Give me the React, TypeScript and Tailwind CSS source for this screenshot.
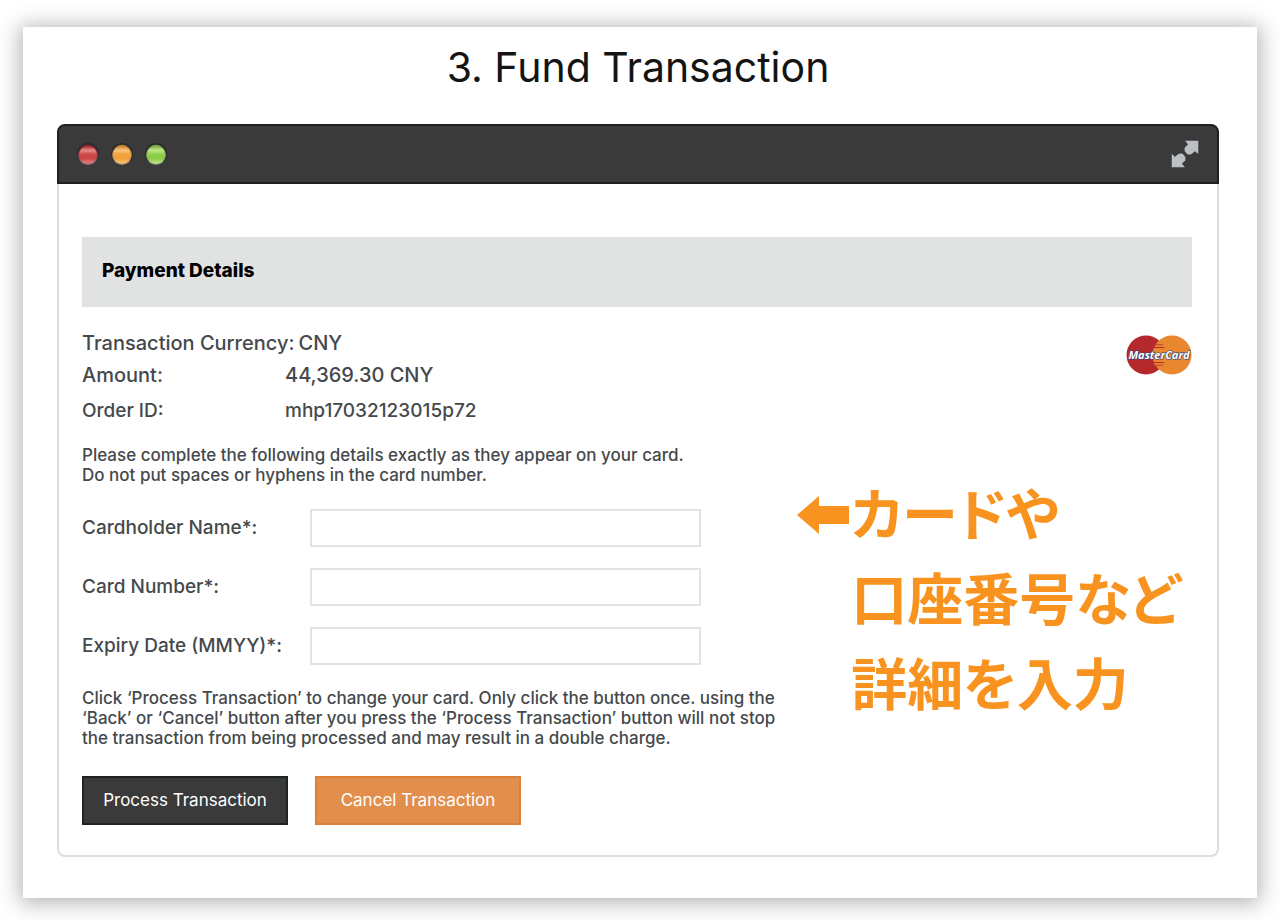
import { useState } from "react";

const FIELDS = [
  { id: "cardholder", label: "Cardholder Name*:" },
  { id: "cardnumber", label: "Card Number*:" },
  { id: "expiry", label: "Expiry Date (MMYY)*:" },
];

function WindowLight({ id, light, mid, dark }: { id: string; light: string; mid: string; dark: string }) {
  return (
    <svg viewBox="0 0 22 22" className="w-[22px] h-[22px]" aria-hidden="true">
      <defs>
        <linearGradient id={id} x1="0" y1="0" x2="0" y2="1">
          <stop offset="0" stopColor={dark} />
          <stop offset="0.25" stopColor={light} />
          <stop offset="0.5" stopColor={mid} />
          <stop offset="0.7" stopColor={mid} />
          <stop offset="1" stopColor={light} />
        </linearGradient>
      </defs>
      <circle cx="11" cy="11" r="11" fill="#2b2b30" />
      <circle cx="11" cy="12.3" r="9.7" fill="#8d8f8c" />
      <circle cx="11" cy="11.5" r="9.7" fill={dark} />
      <circle cx="11" cy="11.8" r="9" fill={`url(#${id})`} />
    </svg>
  );
}

function ExpandIcon() {
  return (
    <svg viewBox="0 0 28 28" className="w-7 h-7" fill="#bcc0c5" stroke="#2a2b2d" strokeWidth="0.4" aria-hidden="true">
      <path d="M13.8 0.5H27.5V14.5L24 11.5L20.5 14.3Q18.5 15.3 16.5 14.5L14 12Q12.8 10 13.5 7.5L16.8 4.5Z" />
      <path d="M14.2 27.5H0.5V13.5L4 16.5L7.5 13.7Q9.5 12.7 11.5 13.5L14 16Q15.2 18 14.5 20.5L11.2 23.5Z" />
    </svg>
  );
}

function MasterCardLogo() {
  return (
    <svg viewBox="0 0 66 40" className="w-[66px] h-10 shrink-0" role="img" aria-label="MasterCard">
      <circle cx="20" cy="20" r="19.5" fill="#b5282c" />
      <circle cx="46" cy="20" r="19.5" fill="#e98630" />
      <path d="M29 10H37M28 12.5H38M28 27.5H38M29 30H37" stroke="#b5282c" strokeWidth="1.2" />
      <path d="M29 11.2H37M28 28.8H38" stroke="#e98630" strokeWidth="1.2" />
      <text
        x="33"
        y="24"
        fill="#ffffff"
        stroke="#24457c"
        strokeWidth="1.2"
        paintOrder="stroke"
        fontFamily="'Open Sans', sans-serif"
        fontSize="11"
        fontWeight="700"
        fontStyle="italic"
        textAnchor="middle"
      >
        MasterCard
      </text>
    </svg>
  );
}

function Annotation() {
  return (
    <div className="flex items-start shrink-0 text-[#f7931e]">
      <svg viewBox="0 0 52 40" className="w-[52px] h-10 mt-7" fill="currentColor" aria-hidden="true">
        <path d="M0 19L22 0V10H52V28H22V38Z" />
      </svg>
      <p className="pl-0.5 text-[56px] leading-[85px] font-bold font-['Noto_Sans_CJK_JP',sans-serif] [font-feature-settings:'palt']">
        カードや
        <br />
        口座番号など
        <br />
        詳細を入力
      </p>
    </div>
  );
}

export default function App() {
  const [values, setValues] = useState<Record<string, string>>({});

  return (
    <div className="bg-white pt-[27px] pb-[22px] px-[23px] font-['Inter',sans-serif] text-[#45494c]">
      <main className="bg-white pl-[34px] pr-[38px] pt-[14px] pb-[41px] shadow-[0_2px_20px_3px_rgba(60,65,72,0.4)]">
        <h1 className="text-center text-[41px] leading-[52px] text-[#141414]">3. Fund Transaction</h1>

        <section className="mt-[31px]">
          {/* Title bar */}
          <header className="h-[60px] px-5 flex items-center justify-between rounded-t-lg bg-[#3a3a3a] border-2 border-[#1e2124]">
            <div className="flex gap-3 -ml-0.5">
              <WindowLight id="light-red" light="#e58a86" mid="#cc4543" dark="#9c2426" />
              <WindowLight id="light-amber" light="#f9c479" mid="#f0a03c" dark="#c5802c" />
              <WindowLight id="light-green" light="#c2e687" mid="#8dcc49" dark="#7bac45" />
            </div>
            <button type="button" aria-label="Expand" className="-mr-0.5">
              <ExpandIcon />
            </button>
          </header>

          <div className="border-2 border-t-0 border-[#dcddde] rounded-b-lg pl-[23px] pr-[25px] pt-[53px] pb-[30px]">
            <h2 className="h-[70px] px-5 pb-0.5 flex items-center bg-[#e1e2e2] text-[19px] font-extrabold text-black">
              Payment Details
            </h2>

            <div className="flex justify-between pt-5">
              <dl className="leading-8 font-medium">
                <div className="flex gap-1 text-[20px]">
                  <dt>Transaction Currency:</dt>
                  <dd>CNY</dd>
                </div>
                <div className="flex text-[20px]">
                  <dt className="w-[203px]">Amount:</dt>
                  <dd>44,369.30 CNY</dd>
                </div>
                <div className="flex pt-1 text-[19px]">
                  <dt className="w-[203px]">Order ID:</dt>
                  <dd>mhp17032123015p72</dd>
                </div>
              </dl>
              <div className="pt-2">
                <MasterCardLogo />
              </div>
            </div>

            <form onSubmit={(e) => e.preventDefault()}>
              <p className="pt-[18px] text-[17px] leading-5 font-medium">
                Please complete the following details exactly as they appear on your card.
                <br />
                Do not put spaces or hyphens in the card number.
              </p>

              <div className="flex justify-between">
                <div className="pt-6">
                  <div className="space-y-[21px]">
                    {FIELDS.map((field) => (
                      <div key={field.id} className="flex items-center">
                        <label htmlFor={field.id} className="w-[228px] text-[19px] font-medium">
                          {field.label}
                        </label>
                        <input
                          id={field.id}
                          type="text"
                          value={values[field.id] ?? ""}
                          onChange={(e) => setValues({ ...values, [field.id]: e.target.value })}
                          className="w-[391px] h-[38px] px-3 bg-white border-2 border-[#e2e3e4] outline-none focus:border-[#e28f4d]"
                        />
                      </div>
                    ))}
                  </div>

                  <p className="pt-[23px] text-[17px] leading-5 font-medium">
                    Click ‘Process Transaction’ to change your card. Only click the button once. using the
                    <br />
                    ‘Back’ or ‘Cancel’ button after you press the ‘Process Transaction’ button will not stop
                    <br />
                    the transaction from being processed and may result in a double charge.
                  </p>
                </div>
                <div className="pr-3 -mt-[17px]">
                  <Annotation />
                </div>
              </div>

              <div className="flex gap-[27px] pt-7 text-[17px] text-white">
                <button type="submit" className="w-[206px] h-[49px] bg-[#3a3a3a] border-2 border-[#1e2326]">
                  Process Transaction
                </button>
                <button type="button" className="w-[206px] h-[49px] bg-[#e28f4d] border-2 border-[#dd7f35]">
                  Cancel Transaction
                </button>
              </div>
            </form>
          </div>
        </section>
      </main>
    </div>
  );
}
